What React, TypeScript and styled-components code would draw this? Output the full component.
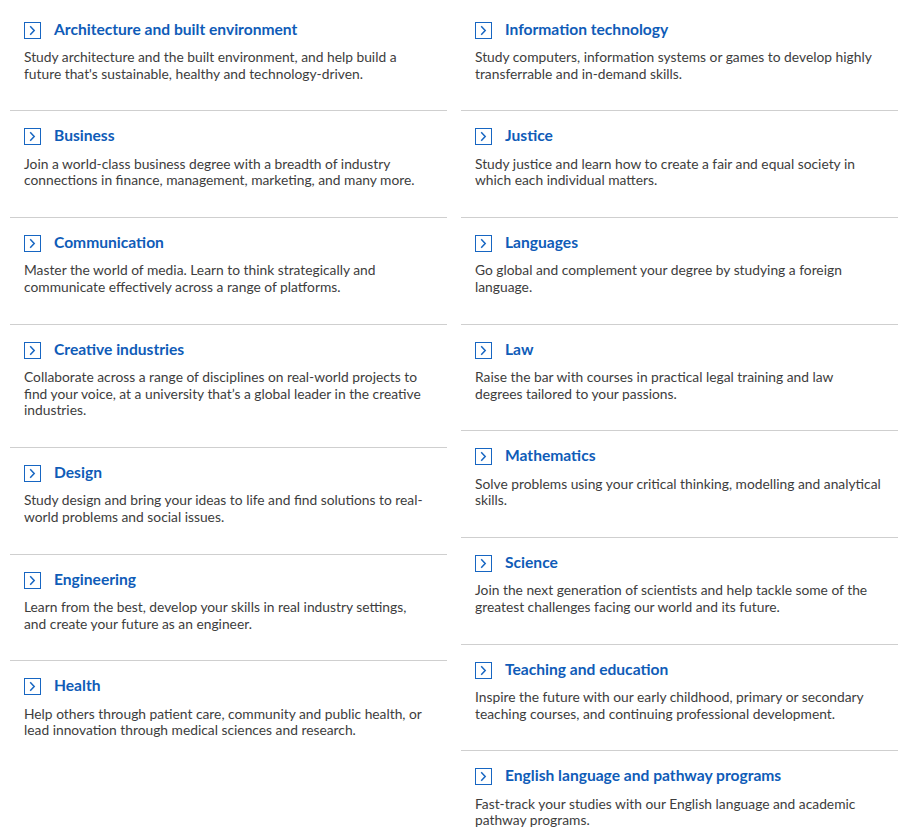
import React from "react";
import styled, { createGlobalStyle } from "styled-components";

const Global = createGlobalStyle`
  html, body { margin: 0; padding: 0; background: #fff; }
  body { font-family: Lato, "Liberation Sans", Arial, sans-serif; }
`;

const Page = styled.div`
  display: grid;
  grid-template-columns: 437px 437px;
  column-gap: 14px;
  padding: 4.5px 16px 0 10px;
`;

const Column = styled.div`
  display: flex;
  flex-direction: column;
`;

const Item = styled.a`
  display: block;
  text-decoration: none;
  padding: 14px 15.5px 27.83px 14px;
  border-top: 1px solid #cfcfcf;
  &:first-child { border-top: none; }
`;

const TitleRow = styled.div`
  display: flex;
  align-items: center;
  gap: 13px;
  height: 20px;
`;

const IconBox = styled.span`
  box-sizing: border-box;
  width: 17px;
  height: 17px;
  margin-top: 3px;
  border: 1px solid #1766c2;
  display: flex;
  align-items: center;
  justify-content: center;
  flex: none;
`;

const Title = styled.span`
  font-size: 15.6px;
  font-weight: 700;
  color: #0f5cb8;
  line-height: 20px;
`;

const Desc = styled.p`
  margin: 10.5px 0 0 0;
  font-size: 13.8px;
  line-height: 16.67px;
  color: #3d3d3d;
`;

const Chevron = () => (
  <svg width="15" height="15" viewBox="0 0 15 15">
    <path d="M5.2 3.3 L9.2 7.5 L5.2 11.7" fill="none" stroke="#1766c2" strokeWidth="1.5" />
  </svg>
);

type Entry = { title: string; desc: string };

const left: Entry[] = [
  { title: "Architecture and built environment", desc: "Study architecture and the built environment, and help build a future that's sustainable, healthy and technology-driven." },
  { title: "Business", desc: "Join a world-class business degree with a breadth of industry connections in finance, management, marketing, and many more." },
  { title: "Communication", desc: "Master the world of media. Learn to think strategically and communicate effectively across a range of platforms." },
  { title: "Creative industries", desc: "Collaborate across a range of disciplines on real-world projects to find your voice, at a university that’s a global leader in the creative industries." },
  { title: "Design", desc: "Study design and bring your ideas to life and find solutions to real-world problems and social issues." },
  { title: "Engineering", desc: "Learn from the best, develop your skills in real industry settings, and create your future as an engineer." },
  { title: "Health", desc: "Help others through patient care, community and public health, or lead innovation through medical sciences and research." },
];

const right: Entry[] = [
  { title: "Information technology", desc: "Study computers, information systems or games to develop highly transferrable and in-demand skills." },
  { title: "Justice", desc: "Study justice and learn how to create a fair and equal society in which each individual matters." },
  { title: "Languages", desc: "Go global and complement your degree by studying a foreign language." },
  { title: "Law", desc: "Raise the bar with courses in practical legal training and law degrees tailored to your passions." },
  { title: "Mathematics", desc: "Solve problems using your critical thinking, modelling and analytical skills." },
  { title: "Science", desc: "Join the next generation of scientists and help tackle some of the greatest challenges facing our world and its future." },
  { title: "Teaching and education", desc: "Inspire the future with our early childhood, primary or secondary teaching courses, and continuing professional development." },
  { title: "English language and pathway programs", desc: "Fast-track your studies with our English language and academic pathway programs." },
];

const List = ({ items }: { items: Entry[] }) => (
  <Column>
    {items.map((e) => (
      <Item key={e.title} href="#">
        <TitleRow>
          <IconBox><Chevron /></IconBox>
          <Title>{e.title}</Title>
        </TitleRow>
        <Desc>{e.desc}</Desc>
      </Item>
    ))}
  </Column>
);

export default function App() {
  return (
    <>
      <Global />
      <Page>
        <List items={left} />
        <List items={right} />
      </Page>
    </>
  );
}
